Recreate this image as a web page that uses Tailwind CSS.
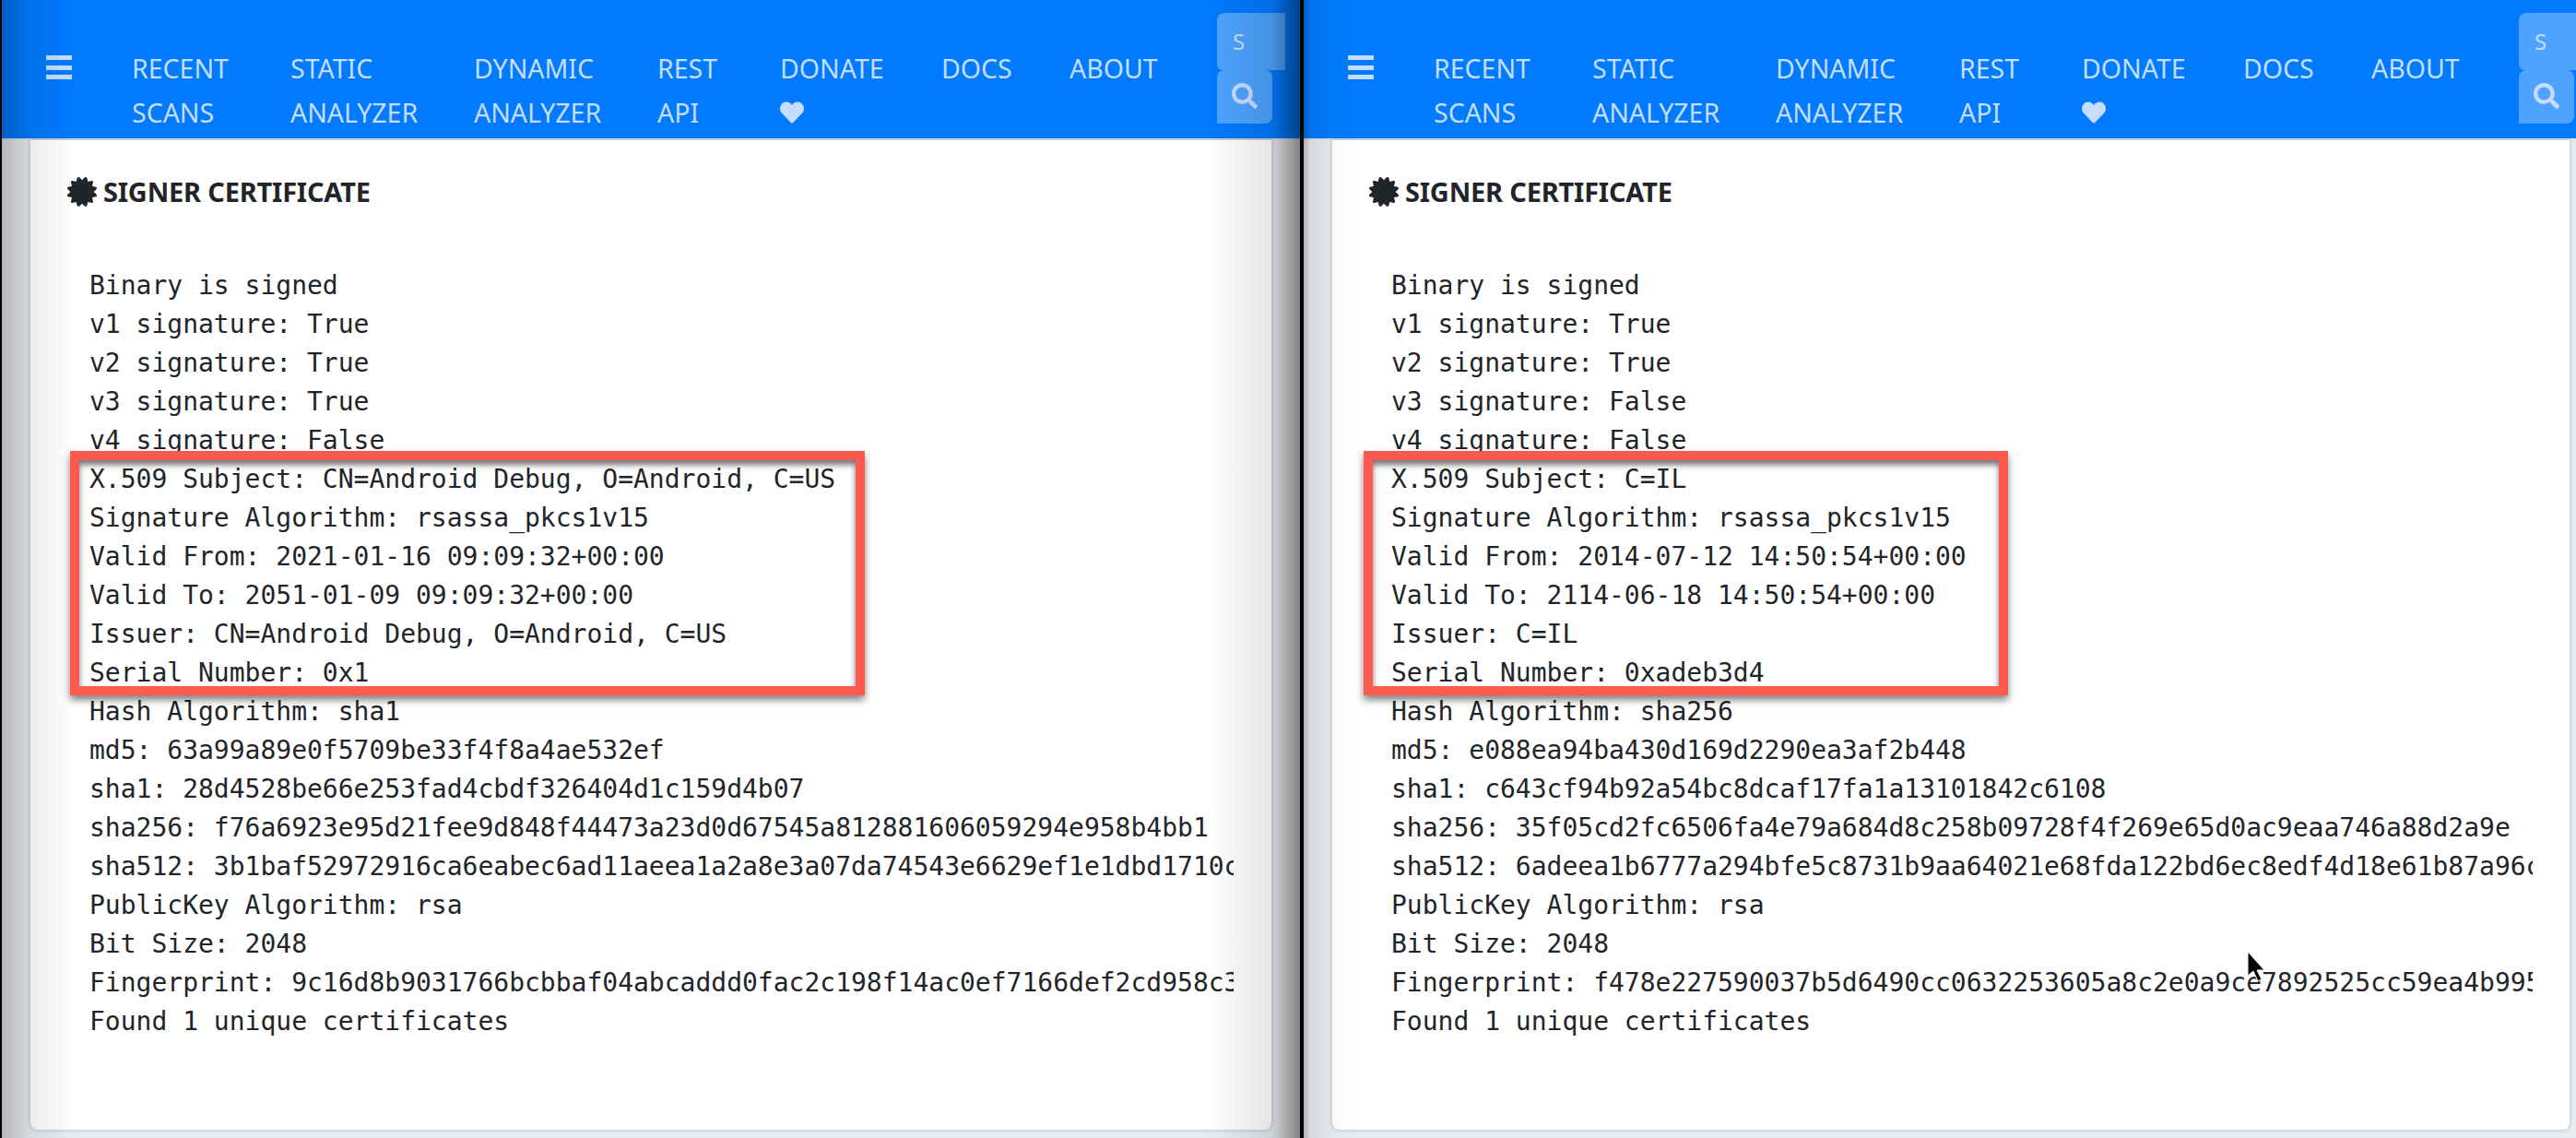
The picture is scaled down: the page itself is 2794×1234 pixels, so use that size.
<!doctype html>
<html>
<head>
<meta charset="utf-8">
<script src="https://cdn.jsdelivr.net/npm/@tailwindcss/browser@4"></script>
<title>Signer certificate</title>
</head>
<body class="bg-black overflow-hidden">
<div class="relative flex h-[1234px] w-[2794px] pl-[2px] gap-[4px] font-['Noto_Sans',sans-serif]">

  <!-- left pane -->
  <section class="relative w-[1408px] h-full shrink-0 overflow-hidden bg-[#e9ecef]">
    <nav class="flex h-[152px] pl-[16px] bg-[#007bff] border-b-2 border-[#dee2e6] text-[28.5px] leading-[48px] text-[#c6ddff]">
      <a class="w-[93px] pl-8 pt-[60px] shrink-0">
        <svg class="w-[28px] h-[26px]" viewBox="0 0 28 26" fill="currentColor"><rect y="0" width="28" height="5"/><rect y="11" width="28" height="5"/><rect y="21" width="28" height="5"/></svg>
      </a>
      <a class="w-[172px] pl-8 pr-4 pt-[50px] shrink-0">RECENT SCANS</a>
      <a class="w-[199px] pl-8 pr-4 pt-[50px] shrink-0">STATIC ANALYZER</a>
      <a class="w-[199px] pl-8 pr-4 pt-[50px] shrink-0">DYNAMIC ANALYZER</a>
      <a class="w-[133px] pl-8 pr-4 pt-[50px] shrink-0">REST API</a>
      <a class="w-[175px] pl-8 pt-[50px] shrink-0">DONATE
        <svg class="w-[26px] h-[26px] mt-[11px]" viewBox="0 0 512 512" fill="currentColor"><path d="M462.3 62.6C407.5 15.9 326 24.3 275.7 76.2L256 96.5l-19.7-20.3C186.1 24.3 104.5 15.9 49.7 62.6c-62.8 53.6-66.1 149.8-9.9 207.9l193.5 199.8c12.5 12.9 32.8 12.9 45.3 0l193.5-199.8c56.3-58.1 53-154.3-9.8-207.9z"/></svg>
      </a>
      <a class="w-[139px] pl-8 pt-[50px] shrink-0">DOCS</a>
      <a class="w-[192px] pl-8 pt-[50px] shrink-0">ABOUT</a>
      <form class="mt-[14px] shrink-0 flex flex-col">
        <div class="w-[74px] h-[62px] pl-[17px] pt-[13px] bg-white/30 rounded-tl-lg rounded-bl-md text-[24px] leading-[36px]"><span class="block w-[12px] overflow-hidden">S</span></div>
        <button type="button" class="flex w-[60px] h-[58px] pl-[16px] pt-[14px] bg-white/30 rounded-t-lg rounded-br-lg"><svg class="w-[28px] h-[28px]" viewBox="0 0 512 512" fill="currentColor"><path d="M505 442.7L405.3 343c-4.5-4.5-10.6-7-17-7H372c27.6-35.3 44-79.7 44-128C416 93.1 322.9 0 208 0S0 93.1 0 208s93.1 208 208 208c48.3 0 92.7-16.4 128-44v16.3c0 6.4 2.5 12.5 7 17l99.7 99.7c9.4 9.4 24.6 9.4 33.9 0l28.3-28.3c9.4-9.4 9.4-24.6.1-34zM208 336c-70.7 0-128-57.2-128-128 0-70.7 57.2-128 128-128 70.7 0 128 57.2 128 128 0 70.7-57.2 128-128 128z"/></svg></button>
      </form>
    </nav>
    <div class="ml-[31px] mr-[31px] h-[1073px] bg-white rounded-b-lg shadow-[0_0_4px_rgba(0,0,0,0.25)] pl-[40px] pt-[40px] text-[#212529]">
      <h3 class="flex items-center gap-[7px] h-[32px] text-[29px] font-bold tracking-[-0.2px]">
        <svg class="w-[32px] h-[32px] shrink-0" viewBox="0 0 512 512" fill="currentColor"><path d="M458.622 255.92l45.985-45.005c13.708-12.977 7.316-36.039-10.664-40.339l-62.65-15.99 17.661-62.015c4.991-17.838-11.829-34.663-29.661-29.671l-61.994 17.667-15.984-62.671C337.085.197 313.765-6.276 300.99 7.228L256 53.57 211.011 7.229c-12.63-13.351-36.047-7.234-40.325 10.668l-15.984 62.671-61.995-17.667C74.87 57.907 58.056 74.738 63.046 92.572l17.661 62.015-62.65 15.99C.069 174.878-6.31 197.944 7.392 210.915l45.985 45.005-45.985 45.004c-13.708 12.977-7.316 36.039 10.664 40.339l62.65 15.99-17.661 62.015c-4.991 17.838 11.829 34.663 29.661 29.671l61.994-17.667 15.984 62.671c4.439 18.575 27.696 24.018 40.325 10.668L256 458.61l44.989 46.001c12.5 13.488 35.987 7.486 40.325-10.668l15.984-62.671 61.994 17.667c17.836 4.994 34.651-11.837 29.661-29.671l-17.661-62.015 62.65-15.99c17.987-4.302 24.366-27.367 10.664-40.339l-45.984-45.004z"/></svg>
        SIGNER CERTIFICATE
      </h3>
      <pre class="mt-[65px] ml-[24px] mr-[41px] overflow-hidden font-['DejaVu_Sans_Mono',monospace] text-[28px] leading-[42px]">Binary is signed
v1 signature: True
v2 signature: True
v3 signature: True
v4 signature: False
X.509 Subject: CN=Android Debug, O=Android, C=US
Signature Algorithm: rsassa_pkcs1v15
Valid From: 2021-01-16 09:09:32+00:00
Valid To: 2051-01-09 09:09:32+00:00
Issuer: CN=Android Debug, O=Android, C=US
Serial Number: 0x1
Hash Algorithm: sha1
md5: 63a99a89e0f5709be33f4f8a4ae532ef
sha1: 28d4528be66e253fad4cbdf326404d1c159d4b07
sha256: f76a6923e95d21fee9d848f44473a23d0d67545a812881606059294e958b4bb1
sha512: 3b1baf52972916ca6eabec6ad11aeea1a2a8e3a07da74543e6629ef1e1dbd1710c
PublicKey Algorithm: rsa
Bit Size: 2048
Fingerprint: 9c16d8b9031766bcbbaf04abcaddd0fac2c198f14ac0ef7166def2cd958c3
Found 1 unique certificates</pre>
    </div>
    <!-- window shadows -->
    <div class="absolute inset-y-0 left-0 w-[80px] bg-[linear-gradient(to_right,rgba(0,0,0,0.22),rgba(0,0,0,0.07)_40%,rgba(0,0,0,0))]"></div>
    <div class="absolute inset-y-0 right-0 w-[100px] bg-[linear-gradient(to_right,rgba(0,0,0,0),rgba(0,0,0,0.1)_68%,rgba(0,0,0,0.16)_75%,rgba(0,0,0,0.45))]"></div>
  </section>

  <!-- right pane -->
  <section class="relative w-[1380px] h-full shrink-0 overflow-hidden bg-[#e9ecef]">
    <nav class="flex h-[152px] pl-[16px] bg-[#007bff] border-b-2 border-[#dee2e6] text-[28.5px] leading-[48px] text-[#c6ddff]">
      <a class="w-[93px] pl-8 pt-[60px] shrink-0">
        <svg class="w-[28px] h-[26px]" viewBox="0 0 28 26" fill="currentColor"><rect y="0" width="28" height="5"/><rect y="11" width="28" height="5"/><rect y="21" width="28" height="5"/></svg>
      </a>
      <a class="w-[172px] pl-8 pr-4 pt-[50px] shrink-0">RECENT SCANS</a>
      <a class="w-[199px] pl-8 pr-4 pt-[50px] shrink-0">STATIC ANALYZER</a>
      <a class="w-[199px] pl-8 pr-4 pt-[50px] shrink-0">DYNAMIC ANALYZER</a>
      <a class="w-[133px] pl-8 pr-4 pt-[50px] shrink-0">REST API</a>
      <a class="w-[175px] pl-8 pt-[50px] shrink-0">DONATE
        <svg class="w-[26px] h-[26px] mt-[11px]" viewBox="0 0 512 512" fill="currentColor"><path d="M462.3 62.6C407.5 15.9 326 24.3 275.7 76.2L256 96.5l-19.7-20.3C186.1 24.3 104.5 15.9 49.7 62.6c-62.8 53.6-66.1 149.8-9.9 207.9l193.5 199.8c12.5 12.9 32.8 12.9 45.3 0l193.5-199.8c56.3-58.1 53-154.3-9.8-207.9z"/></svg>
      </a>
      <a class="w-[139px] pl-8 pt-[50px] shrink-0">DOCS</a>
      <a class="w-[192px] pl-8 pt-[50px] shrink-0">ABOUT</a>
      <form class="mt-[14px] shrink-0 flex flex-col">
        <div class="w-[74px] h-[62px] pl-[17px] pt-[13px] bg-white/30 rounded-tl-lg rounded-bl-md text-[24px] leading-[36px]"><span class="block w-[12px] overflow-hidden">S</span></div>
        <button type="button" class="flex w-[60px] h-[58px] pl-[16px] pt-[14px] bg-white/30 rounded-t-lg rounded-br-lg"><svg class="w-[28px] h-[28px]" viewBox="0 0 512 512" fill="currentColor"><path d="M505 442.7L405.3 343c-4.5-4.5-10.6-7-17-7H372c27.6-35.3 44-79.7 44-128C416 93.1 322.9 0 208 0S0 93.1 0 208s93.1 208 208 208c48.3 0 92.7-16.4 128-44v16.3c0 6.4 2.5 12.5 7 17l99.7 99.7c9.4 9.4 24.6 9.4 33.9 0l28.3-28.3c9.4-9.4 9.4-24.6.1-34zM208 336c-70.7 0-128-57.2-128-128 0-70.7 57.2-128 128-128 70.7 0 128 57.2 128 128 0 70.7-57.2 128-128 128z"/></svg></button>
      </form>
    </nav>
    <div class="ml-[31px] mr-[7px] h-[1073px] bg-white rounded-b-lg shadow-[0_0_4px_rgba(0,0,0,0.25)] pl-[40px] pt-[40px] text-[#212529]">
      <h3 class="flex items-center gap-[7px] h-[32px] text-[29px] font-bold tracking-[-0.2px]">
        <svg class="w-[32px] h-[32px] shrink-0" viewBox="0 0 512 512" fill="currentColor"><path d="M458.622 255.92l45.985-45.005c13.708-12.977 7.316-36.039-10.664-40.339l-62.65-15.99 17.661-62.015c4.991-17.838-11.829-34.663-29.661-29.671l-61.994 17.667-15.984-62.671C337.085.197 313.765-6.276 300.99 7.228L256 53.57 211.011 7.229c-12.63-13.351-36.047-7.234-40.325 10.668l-15.984 62.671-61.995-17.667C74.87 57.907 58.056 74.738 63.046 92.572l17.661 62.015-62.65 15.99C.069 174.878-6.31 197.944 7.392 210.915l45.985 45.005-45.985 45.004c-13.708 12.977-7.316 36.039 10.664 40.339l62.65 15.99-17.661 62.015c-4.991 17.838 11.829 34.663 29.661 29.671l61.994-17.667 15.984 62.671c4.439 18.575 27.696 24.018 40.325 10.668L256 458.61l44.989 46.001c12.5 13.488 35.987 7.486 40.325-10.668l15.984-62.671 61.994 17.667c17.836 4.994 34.651-11.837 29.661-29.671l-17.661-62.015 62.65-15.99c17.987-4.302 24.366-27.367 10.664-40.339l-45.984-45.004z"/></svg>
        SIGNER CERTIFICATE
      </h3>
      <pre class="mt-[65px] ml-[24px] mr-[40px] overflow-hidden font-['DejaVu_Sans_Mono',monospace] text-[28px] leading-[42px]">Binary is signed
v1 signature: True
v2 signature: True
v3 signature: False
v4 signature: False
X.509 Subject: C=IL
Signature Algorithm: rsassa_pkcs1v15
Valid From: 2014-07-12 14:50:54+00:00
Valid To: 2114-06-18 14:50:54+00:00
Issuer: C=IL
Serial Number: 0xadeb3d4
Hash Algorithm: sha256
md5: e088ea94ba430d169d2290ea3af2b448
sha1: c643cf94b92a54bc8dcaf17fa1a13101842c6108
sha256: 35f05cd2fc6506fa4e79a684d8c258b09728f4f269e65d0ac9eaa746a88d2a9e
sha512: 6adeea1b6777a294bfe5c8731b9aa64021e68fda122bd6ec8edf4d18e61b87a96c
PublicKey Algorithm: rsa
Bit Size: 2048
Fingerprint: f478e227590037b5d6490cc0632253605a8c2e0a9ce7892525cc59ea4b995
Found 1 unique certificates</pre>
    </div>
    <div class="absolute inset-y-0 left-0 w-[60px] bg-[linear-gradient(to_right,rgba(0,0,0,0.25),rgba(0,0,0,0.08)_12%,rgba(0,0,0,0.02)_55%,rgba(0,0,0,0))]"></div>
  </section>

  <!-- red annotation boxes drawn over the screenshot -->
  <div class="absolute left-[76px] top-[489px] w-[862px] h-[265px] border-[10px] border-[#fb5a4c] shadow-[0_5px_8px_rgba(0,0,0,0.5),inset_0_5px_6px_rgba(0,0,0,0.55)]"></div>
  <div class="absolute left-[1479px] top-[489px] w-[699px] h-[265px] border-[10px] border-[#fb5a4c] shadow-[0_5px_8px_rgba(0,0,0,0.5),inset_0_5px_6px_rgba(0,0,0,0.55)]"></div>

  <!-- mouse pointer -->
  <svg class="absolute left-[2437px] top-[1031px] w-[24px] h-[36px]" viewBox="0 0 24 36"><path d="M1 1v26l6-5 5 11 4-2-5-10h8z" fill="#000" stroke="#fff" stroke-width="1"/></svg>
</div>
</body>
</html>
